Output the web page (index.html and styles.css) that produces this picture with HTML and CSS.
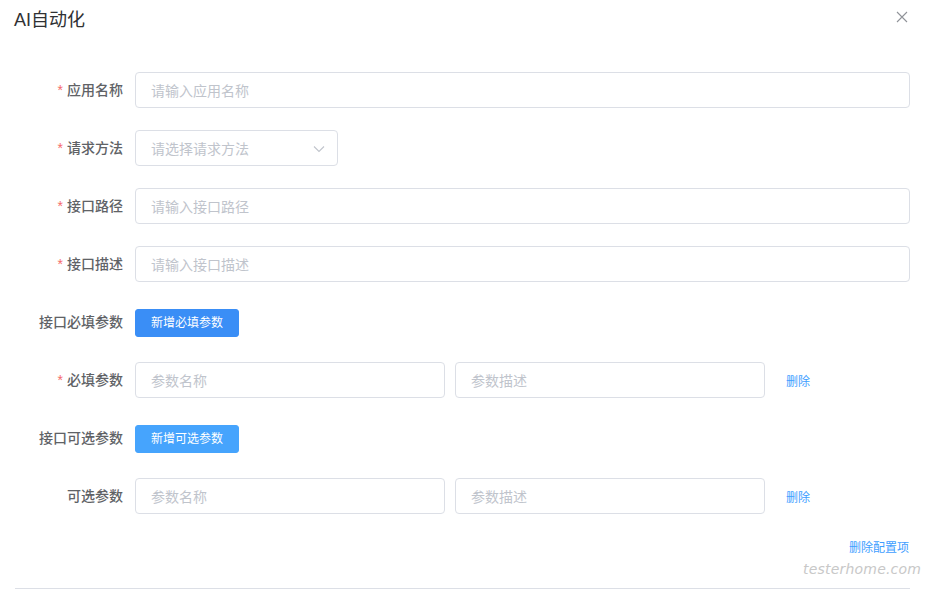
FILE: index.html
```html
<!DOCTYPE html>
<html lang="zh-CN">
<head>
<meta charset="utf-8">
<title>AI自动化</title>
<link rel="stylesheet" href="styles.css">
</head>
<body>
<div class="dialog">
  <div class="header">
    <span class="title">AI自动化</span>
    <button class="close" aria-label="关闭">
      <svg width="12" height="12" viewBox="0 0 12 12"><path d="M1 1L11 11M11 1L1 11" stroke="#909399" stroke-width="1.1" fill="none"/></svg>
    </button>
  </div>
  <div class="form">
    <div class="row">
      <label class="label"><span class="req">*</span>应用名称</label>
      <div class="control"><div class="input full"><span class="ph">请输入应用名称</span></div></div>
    </div>
    <div class="row">
      <label class="label"><span class="req">*</span>请求方法</label>
      <div class="control"><div class="input select"><span class="ph">请选择请求方法</span>
        <svg class="arrow" width="12" height="8" viewBox="0 0 12 8"><path d="M1 1.5L6 6.5L11 1.5" stroke="#c0c4cc" stroke-width="1.1" fill="none"/></svg>
      </div></div>
    </div>
    <div class="row">
      <label class="label"><span class="req">*</span>接口路径</label>
      <div class="control"><div class="input full"><span class="ph">请输入接口路径</span></div></div>
    </div>
    <div class="row">
      <label class="label"><span class="req">*</span>接口描述</label>
      <div class="control"><div class="input full"><span class="ph">请输入接口描述</span></div></div>
    </div>
    <div class="row">
      <label class="label">接口必填参数</label>
      <div class="control"><button class="btn btn-dark">新增必填参数</button></div>
    </div>
    <div class="row">
      <label class="label"><span class="req">*</span>必填参数</label>
      <div class="control pair">
        <div class="input half"><span class="ph">参数名称</span></div>
        <div class="input half"><span class="ph">参数描述</span></div>
        <a class="link del">删除</a>
      </div>
    </div>
    <div class="row">
      <label class="label">接口可选参数</label>
      <div class="control"><button class="btn btn-light">新增可选参数</button></div>
    </div>
    <div class="row">
      <label class="label">可选参数</label>
      <div class="control pair">
        <div class="input half"><span class="ph">参数名称</span></div>
        <div class="input half"><span class="ph">参数描述</span></div>
        <a class="link del">删除</a>
      </div>
    </div>
    <div class="footer-link"><a class="link">删除配置项</a></div>
    <div class="divider"></div>
  </div>
  <span class="watermark">testerhome.com</span>
</div>
</body>
</html>
```
FILE: styles.css
```css
html, body {
  margin: 0;
  padding: 0;
  background: #fff;
}
body {
  font-family: "Liberation Sans", "Noto Sans CJK SC", sans-serif;
  color: #606266;
  width: 929px;
  height: 592px;
  overflow: hidden;
}
.dialog {
  position: relative;
  width: 929px;
  height: 592px;
}
.header {
  display: flex;
  justify-content: space-between;
  align-items: flex-start;
  padding: 8px 21px 0 14px;
  height: 64px;
  box-sizing: border-box;
}
.title {
  font-size: 18px;
  line-height: 24px;
  color: #303133;
}
.close {
  border: 0;
  background: none;
  padding: 0;
  margin-top: 3px;
  width: 12px;
  height: 12px;
  display: flex;
}
.form {
  padding: 8px 19px 0 15px;
}
.row {
  display: flex;
  align-items: center;
  height: 36px;
  margin-bottom: 22px;
}
.label {
  width: 108px;
  padding-right: 12px;
  text-align: right;
  font-size: 14px;
  font-weight: 500;
  line-height: 36px;
  color: #606266;
  flex: none;
  white-space: nowrap;
}
.req {
  color: #f56c6c;
  margin-right: 4px;
}
.control {
  flex: 1;
  display: flex;
  align-items: center;
}
.input {
  height: 36px;
  box-sizing: border-box;
  border: 1px solid #dcdfe6;
  border-radius: 4px;
  padding: 0 15px;
  display: flex;
  align-items: center;
  font-size: 14px;
}
.ph {
  color: #c0c4cc;
}
.full {
  width: 100%;
}
.select {
  width: 203px;
  justify-content: space-between;
  padding-right: 12px;
}
.arrow {
  margin-top: 1px;
}
.pair {
  gap: 10px;
}
.half {
  width: 310px;
}
.link {
  color: #409eff;
  font-size: 12px;
  cursor: pointer;
}
.del {
  margin-left: 11px;
}
.btn {
  height: 28px;
  padding: 0 15px;
  border-radius: 3px;
  font-size: 12px;
  color: #fff;
  border: 1px solid transparent;
  font-family: "Liberation Sans", "Noto Sans CJK SC", sans-serif;
  line-height: 26px;
  margin-top: 2px;
}
.btn-dark {
  background: #3a8ef6;
  border-color: #3a8ef6;
}
.btn-light {
  background: #46a4fd;
  border-color: #46a4fd;
}
.footer-link {
  display: flex;
  justify-content: flex-end;
  padding-right: 1px;
  height: 24px;
  align-items: center;
  margin-top: -2px;
}
.divider {
  margin-top: 30px;
  height: 1px;
  background: #dcdfe6;
  width: 895px;
}
.watermark {
  position: absolute;
  left: 803px;
  top: 561px;
  font-family: "DejaVu Sans", sans-serif;
  font-style: italic;
  font-size: 14px;
  letter-spacing: 0.2px;
  color: #c8c8c8;
}
```
